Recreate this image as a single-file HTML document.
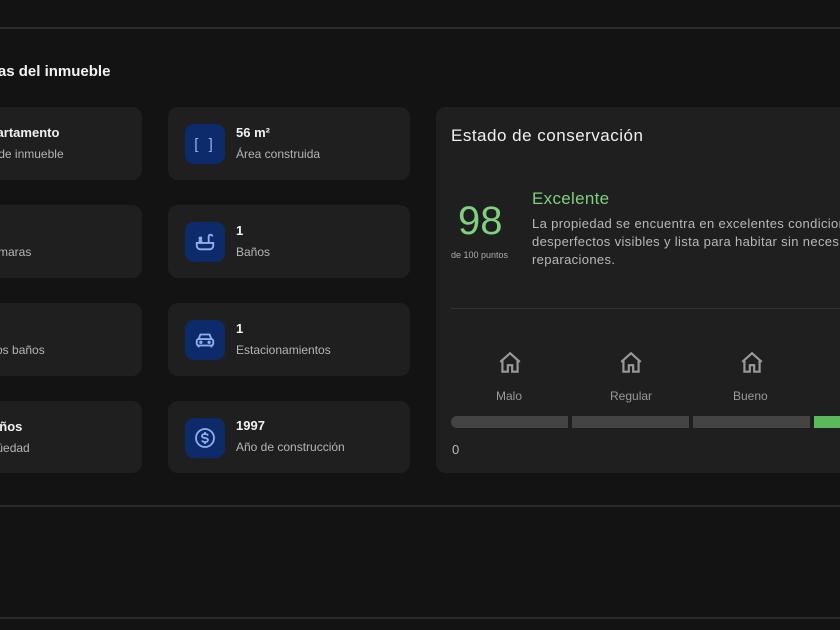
<!DOCTYPE html>
<html><head><meta charset="utf-8"><style>
*{margin:0;padding:0;box-sizing:border-box}
html,body{width:840px;height:630px;overflow:hidden}
body{background:#131313;font-family:"Liberation Sans","DejaVu Sans",sans-serif;position:relative;color:#eee}
#w{position:absolute;left:0;top:0;width:840px;height:630px;overflow:hidden}
.hl{position:absolute;left:0;width:840px;height:2px;background:#2a2a2a}
.card{position:absolute;background:#1f1f1f;border-radius:10px}
.ic{position:absolute;left:17px;top:17px;width:40px;height:40px;background:#0d2a6b;border-radius:9px;display:flex;align-items:center;justify-content:center}
.t{position:absolute;font-size:13px;font-weight:bold;color:#f2f2f2;white-space:nowrap}
.s{position:absolute;font-size:12px;color:#b5b5b5;white-space:nowrap}
.abs{position:absolute;white-space:nowrap}
</style></head><body><div id="w">
<div class="hl" style="top:27px"></div>
<div class="hl" style="top:505px"></div>
<div class="hl" style="top:617px"></div>
<div class="abs" style="left:-93px;top:63px;font-size:15px;font-weight:bold;color:#f2f2f2">Características del inmueble</div>

<div class="card" style="left:-40px;top:107px;width:182px;height:73px"><div class="t" style="left:12px;top:18px">Departamento</div><div class="s" style="left:12px;top:40px">Tipo de inmueble</div></div>
<div class="card" style="left:-40px;top:205px;width:182px;height:73px"><div class="t" style="left:12px;top:18px">2</div><div class="s" style="left:10px;top:40px">Recámaras</div></div>
<div class="card" style="left:-40px;top:303px;width:182px;height:73px"><div class="t" style="left:12px;top:18px">0</div><div class="s" style="left:10px;top:40px">Medios baños</div></div>
<div class="card" style="left:-40px;top:401px;width:182px;height:72px"><div class="t" style="left:14px;top:18px">27 años</div><div class="s" style="left:9px;top:40px">Antigüedad</div></div>

<div class="card" style="left:168px;top:107px;width:242px;height:73px"><div class="ic"><span style="color:#8fb0f0;font-size:15px;letter-spacing:3px">[ ]</span></div><div class="t" style="left:68px;top:18px">56 m²</div><div class="s" style="left:68px;top:40px">Área construida</div></div>
<div class="card" style="left:168px;top:205px;width:242px;height:73px"><div class="ic"><svg width="22" height="22" viewBox="0 0 24 24" fill="none" stroke="#8fb0f0" stroke-width="2"><path d="M3 13h18v3a4 4 0 0 1-4 4H7a4 4 0 0 1-4-4z"/><path d="M16 13V6a2 2 0 0 1 4 0"/><circle cx="7" cy="8" r="1"/><path d="M6 13v-2h3"/></svg></div><div class="t" style="left:68px;top:18px">1</div><div class="s" style="left:68px;top:40px">Baños</div></div>
<div class="card" style="left:168px;top:303px;width:242px;height:73px"><div class="ic"><svg width="22" height="22" viewBox="0 0 24 24" fill="none" stroke="#8fb0f0" stroke-width="2"><path d="M5 11l2-5h10l2 5"/><rect x="3" y="11" width="18" height="7" rx="2"/><path d="M5 18v2M19 18v2"/><circle cx="7.5" cy="14.5" r=".8"/><circle cx="16.5" cy="14.5" r=".8"/></svg></div><div class="t" style="left:68px;top:18px">1</div><div class="s" style="left:68px;top:40px">Estacionamientos</div></div>
<div class="card" style="left:168px;top:401px;width:242px;height:72px"><div class="ic"><svg width="24" height="24" viewBox="0 0 24 24" fill="none" stroke="#8fb0f0" stroke-width="1.8"><circle cx="12" cy="12" r="9"/><path d="M15 9.5c-.5-1-1.6-1.5-3-1.5-1.7 0-3 .8-3 2s1.3 1.7 3 2 3 .8 3 2-1.3 2-3 2c-1.4 0-2.5-.5-3-1.5M12 6v2M12 16v2"/></svg></div><div class="t" style="left:68px;top:17px">1997</div><div class="s" style="left:68px;top:39px">Año de construcción</div></div>

<div class="card" style="left:436px;top:107px;width:420px;height:366px;overflow:hidden">
<div class="abs" style="left:15px;top:19px;font-size:17px;letter-spacing:0.5px;color:#f0f0f0">Estado de conservación</div>
<div class="abs" style="left:22px;top:92px;font-size:40px;color:#7fd07f">98</div>
<div class="abs" style="left:15px;top:143px;font-size:9px;color:#aaa">de 100 puntos</div>
<div class="abs" style="left:96px;top:82px;font-size:17px;letter-spacing:0.3px;color:#7fd07f">Excelente</div>
<div class="abs" style="left:96px;top:108px;font-size:13px;letter-spacing:0.35px;color:#b8b8b8;line-height:18px">La propiedad se encuentra en excelentes condiciones, sin<br>desperfectos visibles y lista para habitar sin necesidad de<br>reparaciones.</div>
<div class="abs" style="left:15px;top:201px;width:420px;height:1px;background:#333"></div>
<svg class="abs" style="left:61px;top:243px" width="26" height="26" viewBox="0 0 24 24" fill="none" stroke="#999" stroke-width="2"><path d="M3 11l9-8 9 8M5 9v11h5v-6h4v6h5V9"/></svg>
<svg class="abs" style="left:182px;top:243px" width="26" height="26" viewBox="0 0 24 24" fill="none" stroke="#999" stroke-width="2"><path d="M3 11l9-8 9 8M5 9v11h5v-6h4v6h5V9"/></svg>
<svg class="abs" style="left:303px;top:243px" width="26" height="26" viewBox="0 0 24 24" fill="none" stroke="#999" stroke-width="2"><path d="M3 11l9-8 9 8M5 9v11h5v-6h4v6h5V9"/></svg>
<div class="abs" style="left:60px;top:282px;font-size:12px;color:#999">Malo</div>
<div class="abs" style="left:174px;top:282px;font-size:12px;color:#999">Regular</div>
<div class="abs" style="left:297px;top:282px;font-size:12px;color:#999">Bueno</div>
<div class="abs" style="left:15px;top:309px;width:117px;height:12px;background:#444;border-radius:6px 0 0 6px"></div>
<div class="abs" style="left:136px;top:309px;width:117px;height:12px;background:#444"></div>
<div class="abs" style="left:257px;top:309px;width:117px;height:12px;background:#444"></div>
<div class="abs" style="left:378px;top:309px;width:60px;height:12px;background:#5cb85c"></div>
<div class="abs" style="left:16px;top:335px;font-size:13px;color:#bbb">0</div>
</div>
</div></body></html>
